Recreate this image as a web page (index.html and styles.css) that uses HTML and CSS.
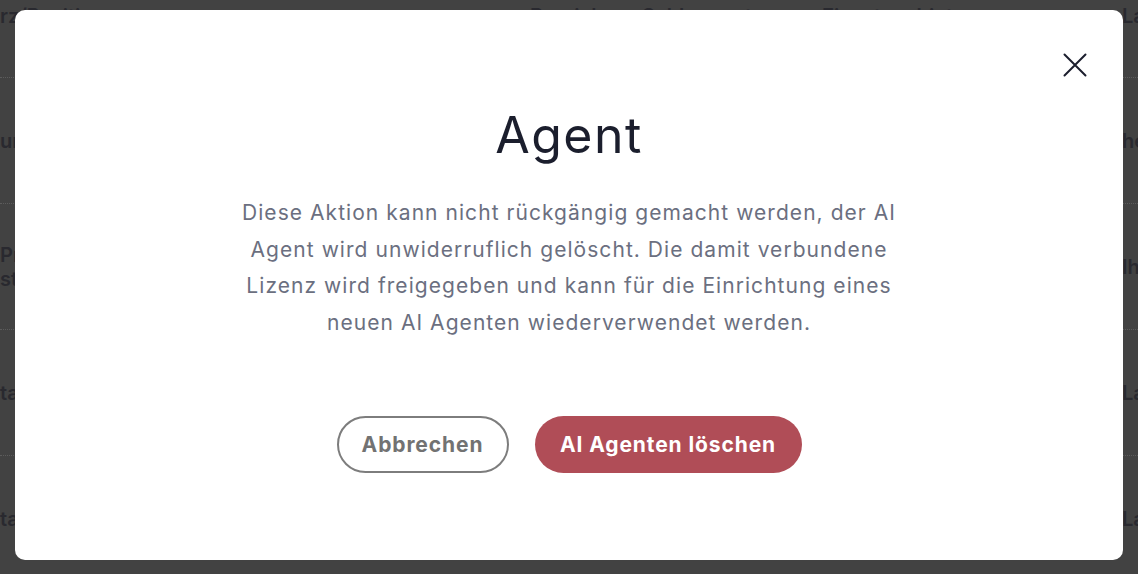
FILE: index.html
```html
<!DOCTYPE html>
<html lang="de">
<head>
<meta charset="UTF-8">
<title>Agent löschen</title>
<link rel="stylesheet" href="styles.css">
</head>
<body>
<div class="page">
    <div class="row head">
        <div class="cell">rz/Position</div>
        <div class="cell">Bereich</div>
        <div class="cell">Schlagworte</div>
        <div class="cell">Einsatzgebiet</div>
        <div class="cell">Lager</div>
    </div>
    <div class="row">
        <div class="cell">un</div>
        <div class="cell end">he</div>
    </div>
    <div class="row">
        <div class="cell">Pr<br>st</div>
        <div class="cell end">Ih</div>
    </div>
    <div class="row">
        <div class="cell">ta</div>
        <div class="cell end">La</div>
    </div>
    <div class="row last">
        <div class="cell">ta</div>
        <div class="cell end">La</div>
    </div>
</div>

<div class="backdrop">
    <div class="modal">
        <button class="close" aria-label="Schließen">
            <svg width="24" height="24" viewBox="0 0 24 24" fill="none" stroke="currentColor" stroke-width="2" stroke-linecap="round">
                <path d="M1.5 1.5 L22.5 22.5 M22.5 1.5 L1.5 22.5"/>
            </svg>
        </button>
        <h1>Agent</h1>
        <p>Diese Aktion kann nicht rückgängig gemacht werden, der AI Agent wird unwiderruflich gelöscht. Die damit verbundene Lizenz wird freigegeben und kann für die Einrichtung eines neuen AI Agenten wiederverwendet werden.</p>
        <div class="actions">
            <button class="btn btn-outline">Abbrechen</button>
            <button class="btn btn-danger">AI Agenten löschen</button>
        </div>
    </div>
</div>
</body>
</html>
```

FILE: styles.css
```css
body {
  margin: 0;
  height: 574px;
  overflow: hidden;
  background-color: #424242;
  font-family: 'Inter', 'Liberation Sans', sans-serif;
}

.page {
  color: #29292f;
  font-size: 20px;
  font-weight: 600;
}

.row {
  display: grid;
  grid-template-columns: 530px 112px 180px 300px 1fr;
  align-items: center;
  height: 125px;
  border-bottom: 1px dotted #5c5c5c;
  white-space: nowrap;
  overflow: hidden;
}

.row.head {
  height: 78px;
  align-items: start;
  padding-top: 4px;
  box-sizing: border-box;
}

.row.last {
  border-bottom: none;
}

.cell {
  overflow: hidden;
}

.cell.end {
  grid-column: 5;
}

.backdrop {
  position: fixed;
  inset: 0;
  display: flex;
  justify-content: center;
  align-items: flex-start;
  padding-top: 10px;
}

.modal {
  position: relative;
  width: 1108px;
  height: 550px;
  box-sizing: border-box;
  background-color: #fff;
  border-radius: 10px;
  padding: 93px 0 0;
  text-align: center;
}

.close {
  position: absolute;
  top: 43px;
  right: 36px;
  padding: 0;
  border: none;
  background: none;
  color: #1b1e2d;
  cursor: pointer;
}

.close svg {
  display: block;
}

h1 {
  margin: 0;
  color: #1b1e2d;
  font-size: 50px;
  font-weight: 400;
  letter-spacing: 1.5px;
  line-height: 64px;
}

p {
  width: 672px;
  margin: 28px auto 0;
  color: #6b6f80;
  font-size: 21px;
  letter-spacing: 1.05px;
  line-height: 36.7px;
}

.actions {
  display: flex;
  justify-content: center;
  gap: 26px;
  margin-top: 74px;
}

.btn {
  height: 57px;
  box-sizing: border-box;
  border-radius: 29px;
  font-family: inherit;
  font-size: 21px;
  font-weight: 700;
  letter-spacing: 0.9px;
  cursor: pointer;
}

.btn-outline {
  width: 172px;
  border: 2px solid #7d7d7d;
  background-color: #fff;
  color: #727272;
}

.btn-danger {
  width: 267px;
  border: none;
  background-color: #b04d57;
  color: #fff;
}
```
